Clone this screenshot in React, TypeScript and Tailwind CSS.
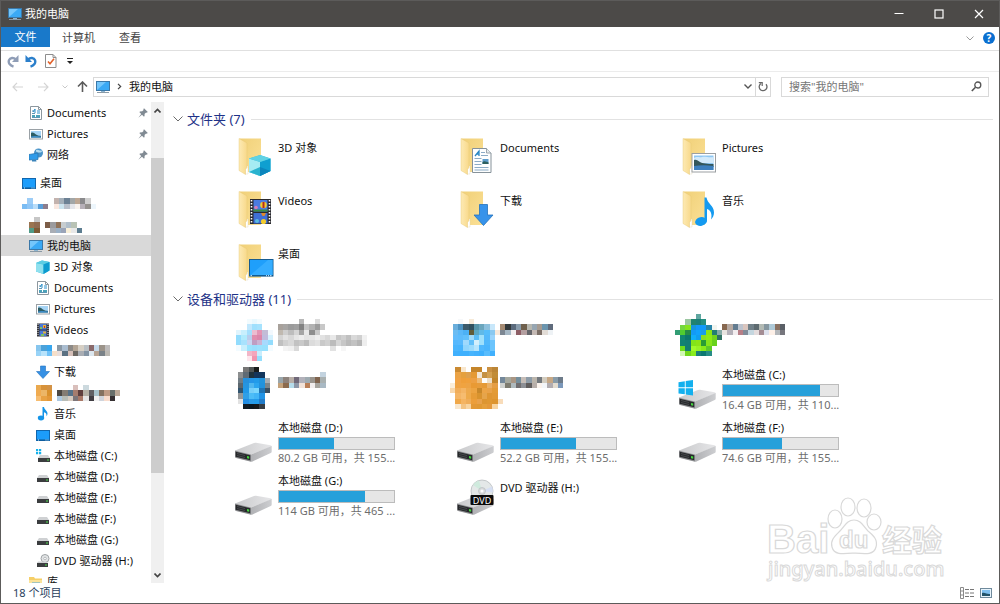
import React from "react";

/* ---------- Mosaic blocks ---------- */

const CELL = 5.25;

type MosaicProps = { rows: string[]; className?: string };

// Each row is a space separated list of hex colours, "-" leaves the cell empty
const Mosaic = ({ rows, className }: MosaicProps) => {
  const grid = rows.map((r) => r.trim().split(/\s+/));
  const cols = Math.max(...grid.map((r) => r.length));
  return (
    <svg
      aria-hidden="true"
      width={Math.round(cols * CELL)}
      height={Math.round(grid.length * CELL)}
      viewBox={`0 0 ${cols} ${grid.length}`}
      preserveAspectRatio="none"
      shapeRendering="crispEdges"
      className={className}
    >
      {grid.map((row, y) =>
        row.map((c, x) =>
          c === "-" ? null : <rect key={`${x}-${y}`} x={x} y={y} width="1" height="1" fill={`#${c}`} />
        )
      )}
    </svg>
  );
};

const pinkIcon = [
  "- - f2fbfe e8f8fe f2fbfe - -",
  "- - c2e8fd a0e0fd a6e2fd - -",
  "e0f4fd c8effd a4dffd ecbccf e394b4 c3bcd6 f2f8fd",
  "92dcfd b0ebfd b9cdec e08eae dc86aa c0bbdd d4f0fd",
  "92dcfd a8e2fd c9d4f0 bf9dc2 cbb3d3 a8dafd 92dcfd",
  "f2fbff c8effd 9ae4fd 9adefd 9ce1fd 98e1fd f2fbff",
  "- - f2b6c8 f5a5bb c8edfd - -",
  "- - fde6ed f195ae 95dffd - -",
];
const pinkLabel = [
  "- - - - b8b8b8 - - dcdcdc - - - - - - - - -",
  "a8a19b a7a5a3 9b9b9b a0a0a0 828282 c4c4c4 b2b2b2 9c9c9c c8c8c8 - - - - - - - -",
  "c0b9b0 cecece bdbdbd d5d5d5 a5a5a5 e8e8e8 8e8e8e c9c9c9 - - - - - - - - -",
  "d4d4d4 e2e2e2 d8d8d8 e6e6e6 ededed e4e4e4 e6e6e6 efefef e2e2e2 d8d8d8 e8e8e8 c6c6c6 cfcfcf c0c0c0 d9d9d9 d0d0d0 f1f1f1",
  "c0c0c0 d0d0d0 d8d8d8 c2c2c2 c9c9c9 bcbcbc dcdcdc e2e2e2 c9c9c9 d0d0d0 bcbcbc d6d6d6 c6c6c6 b9b9b9 c2c2c2 b5b5b5 eeeeee",
  "- f4f4f4 f0f0f0 d9d9d9 - - - - - - e2e2e2 - f6f6f6 - - - -",
];
const blueIcon = [
  "- f6f8fa - f6ead8 - - - - -",
  "6aaedb 4d93c2 3c5b6c 31515f 5694a8 6ba6bd 8dc0dc c8e7fa -",
  "6bbcf2 5ab8f8 4cb1f5 625c38 5ba7c2 60b9e7 56bdfb 8bc9f0 f8e8da",
  "62bcfc 5cbcfc 62c0fb a0daf9 5bbdf7 9fe0fb 55b9fb 9bd4fb -",
  "55b8fd 58b9fd 9fd9fd 61c0fa d3effc 9fe0fc 50b8fc 6cc4fc -",
  "4ab5fd 47b4fd 90d5fd 9adbfd b6e5fd 50b8fd 4ab5fd 6bc5fd -",
  "40b0fd 3eb0fd 3eb0fd 46b4fd 42b1fd 3eb0fd 59bdfd 40b0fd -",
];
const blueLabel = [
  "a58b73 32393b 5b6b7d 899cac 6f604d b7b7af 97a6b2 a69b91 6b95ae 5f6b7c",
  "7d8792 a6b8c5 f3eff0 8d5e65 b49fa0 65666b c4b9b4 7c6f67 e2dcd6 eef2f5",
];
const greenIcon = [
  "- - - - 5fa6a0 - - - -",
  "- - 9bc7a1 21836f 1c7f77 258f80 - - -",
  "- 74d640 84e51d 1795dc 1397fa 1199fa 2783a7 f1f4ef -",
  "329d74 50cd30 258c47 139af5 11a2fb 199de9 8ae613 237e71 85aaa6",
  "- 128671 0b776e 11aef8 119eee 8adf20 90ea13 71d41b 2f7263",
  "- 128273 137d74 82e41a 8de416 299d36 86e51a 68d11d -",
  "- 70dc1d 157c70 a1fa2a 97f225 88eb19 5ec929 - -",
  "- d1f7b3 70d61a 89ec1c 1b7e78 0c7771 278c86 - -",
];
const greenLabel = [
  "87684f b6a9a1 637c90 bcc3ce d9c5be 718189 5e6b70 b3bab4 8697a0 aec9d7 8a7161 5a5f66",
  "e8e4e0 b4b1b9 f2edef b77f87 818c9a c4d6df e4dcdd a48d94 dde1ed fdf0e8 b4b7bb 76767d",
];
const phoneIcon = [
  "- 767676 4f5455 181b1b - -",
  "8d8f90 606b74 1f323d 15345a 12365d -",
  "717d85 2690dc 2595e8 229be9 2294dd a4acb3",
  "5c676e 2695e0 50b7ef 2ca5ef 2092de 7b858b",
  "32556f 2198e7 77cff9 7cd7fd 1f74b5 3b5063",
  "939697 309fe6 4cbdf7 42b5f6 2294e6 -",
  "e2e2e2 228de3 2a9be8 229ceb 237dca -",
  "- 111b23 0c1720 17191b 373d43 -",
];
const phoneLabel = [
  "- - - - - - - - c3d3df",
  "9aa6ab 8d827b b8aea7 706878 b2b1ba 9eaab0 99948d 80644e a9b0b0 -",
  "c4a27b 8c6b4e b6dceb 8c96a7 f2e2d8 b97e56 f2eeee a7a59f a9b9c4 -",
];
const orangeIcon = [
  "- ca8a32 f9e7cd - c5852a c5852a - ca9042 bb8536 -",
  "- eba345 e5a03d dea04d e59a34 f2e6d4 c59142 d4a050 c18c37 -",
  "- f0a244 ef9f3a f0a03b eda044 edb974 fdfdfd ecdfca c1852b -",
  "fbeedb efa344 f0a340 eda345 e99a34 e79c3b e59a37 ebb065 e59e44 -",
  "f8d8ad f1ad59 f4b565 eea94c eda442 c8882b eca446 e9a249 e39b36 -",
  "- f4b565 f6bc70 eeaa4b e79c37 d9932e e5a44b df9632 e29935 -",
  "- f0a849 f5b461 efad59 ec9e3a e8a14b dd9531 df9732 dd942e f8dcba",
  "- f9e7cd f3c382 f8d4a0 e39936 e19933 e59f3c e4983a f8d4a0 -",
];
const orangeLabel = [
  "74889a a5a89e a99684 748e9c c6bdb7 8e9ca8 bbb5ac 74797e d3cdc0 c6a886 899ca9 6d7b89",
  "cfd1ce 7d7b6f aeb9bd 706e70 8c8f95 605d5d b8afaa fbf3ed f3f6f9 b2adb0 e3dccf 7b98ba",
];

const treeMosaicA = [
  "- 9dcdf7 - - - - c3b3ae a4afb9 6c8194 a2a6a7 bda794 8a8a8c cfcfcf -",
  "7abcf3 8ec6f7 b9ddf9 5a9fd9 8d7e8d - fae8e0 cbe4ef b9c0cb e4e5ea f8f2ee b6b0b8 95928f edf6fc",
];
const treeMosaicB = [
  "- c6c6c6 - - - - - - - -",
  "9a7450 8f6b51 - 7c5d47 9b9b9e 91745a c7cdd0 b1bfcb b9c3b5 -",
  "4f9a86 7c5a35 - - a8adb5 9ab0c6 9aa4b8 f8efd9 e8e8e8 5c7d90",
];
const treeMosaicC = [
  "87c6ee 4ba2da 37a6ee - 8b99a5 aabdd0 8d8a87 b3a595 d6cfc4 b9bfc4 8a6a6b c5d9ea 9b9389 bdbbbb",
  "98d3f7 b8e3fb 70c2f8 f6dfc9 e9dedb 5b7182 d6c0b9 6c6863 a9adb3 8494a4 dce7ef b7a495 7a8288 bcb9b3",
];
const treeMosaicD = [
  "eaa94f d7923a d39245 - - - - d9bfbb - ccd9de - - - - - -",
  "f0ab50 ecb667 d9912d - 4c4844 847c73 577288 a57c6e 5e3e3d b4b0a5 606064 a8c3cc 847160 bf9b85 686f6b bca998",
  "f7bd70 e8a244 e3983a - acc8e1 b8bdb7 d7cbc0 7c7579 a87867 e5e5e5 403d43 f1f1f1 cfd4dc f9dccd 363032 -",
];

/* ---------- Small 14px icons ---------- */

const Small = ({ children }: { children: React.ReactNode }) => (
  <svg aria-hidden="true" width="14" height="14" viewBox="0 0 14 14" className="shrink-0">
    {children}
  </svg>
);

const DocIcon = () => (
  <Small>
    <path d="M1.5 .5h8l3 3v10h-11z" fill="#fff" stroke="#8c979e" />
    <path d="M9.5 .5v3h3" fill="none" stroke="#8c979e" />
    <path d="M3 5h2.500M3 7.500h3M3 11.500h8" stroke="#5d97b5" />
    <path d="M4 6l2-3v4M8 5h3M8 7h3" stroke="#2c8fc9" fill="none" />
    <path d="M3 9h3v2H3zM7 9h4v2H7z" fill="#4aa3ba" />
  </Small>
);

const PicIcon = () => (
  <Small>
    <rect x=".5" y="2.500" width="13" height="9.500" fill="#fff" stroke="#9aa1a6" />
    <rect x="2" y="4" width="10" height="6.500" fill="#a6d4f5" />
    <path d="M2 6c2-1 3 0 5 1.500s4 1 5 1.500v1.500H2z" fill="#2d5d64" />
    <path d="M2 9.500c3-1 6-.5 10 0v1H2z" fill="#3d8fd0" />
  </Small>
);

const NetworkIcon = () => (
  <Small>
    <circle cx="9.500" cy="5" r="4.500" fill="#4a94c9" />
    <path d="M7 2c2-1 3 .5 5 .5s1 2-1 2-3 0-4-1z" fill="#b5dcf0" />
    <path d="M0 6.500l9-1.500v6.500L0 12z" fill="#2f9be9" stroke="#2672ad" strokeWidth=".7" />
    <path d="M3 12l4-.2.500 1.700H3z" fill="#3a83ba" />
  </Small>
);

const DesktopIcon = () => (
  <Small>
    <rect x=".5" y="2.500" width="13" height="10" fill="#1c9dfb" stroke="#1166ad" />
    <path d="M1 12h12" stroke="#0b548f" />
    <path d="M2 12h1M9.500 12h1M11.500 12h1" stroke="#cfe9ff" />
  </Small>
);

const PcIcon = () => (
  <Small>
    <rect x=".5" y="1.500" width="13" height="9" fill="#3aa9f5" stroke="#3b78a8" />
    <path d="M1 10L10 2H1z" fill="#74c6fb" />
    <path d="M5 11h4v1H5z" fill="#8eb6d2" />
    <path d="M1 12.500h12" stroke="#8a9aa6" />
  </Small>
);

const CubeIcon = () => (
  <Small>
    <path d="M0 3l6-2.500L13.500 2v8.500L7.500 14 0 11.500z" fill="#37b9dd" />
    <path d="M0 3l7.500 1.500V14L0 11.500z" fill="#8fe0ee" />
    <path d="M0 3l6-2.500L13.500 2l-6 2.500z" fill="#5ccde3" />
    <path d="M7.500 4.500l6-2.500v8.500L7.500 14z" fill="#0d9bcf" />
  </Small>
);

const VideoIcon = () => (
  <Small>
    <rect x="1" y=".5" width="12" height="13" fill="#34343a" />
    <path d="M2 1v12M12 1v12" stroke="#d8d8d8" strokeDasharray="1 1" />
    <rect x="3.500" y="1" width="7" height="5.500" fill="#4a78d8" />
    <rect x="3.500" y="7.500" width="7" height="5.500" fill="#4a78d8" />
    <path d="M4 4h2v2H4zM5 11h3v2H5z" fill="#7cc25d" />
    <path d="M7 2h3v3H7zM7 8.500h3v2H7z" fill="#e3b23a" />
    <path d="M8 3h1v2H8z" fill="#c9302c" />
  </Small>
);

const DownIcon = () => (
  <Small>
    <path d="M4.500 1h5v5.500h4L7 13.500.5 6.500h4z" fill="#3590e4" stroke="#2272bf" strokeWidth=".6" />
  </Small>
);

const NoteIcon = () => (
  <Small>
    <ellipse cx="5" cy="11" rx="3.200" ry="2.400" fill="#1494e8" />
    <path d="M6.500 11V0H8c.3 3 3.500 3.500 3.500 6.500 0 1-.3 2-1 2.800.3-2.400-.7-3.500-2.500-4V11z" fill="#1494e8" />
  </Small>
);

const DriveShape = () => (
  <>
    <path d="M1 8l2-3h8l2 3z" fill="#cfd1d3" />
    <rect x="1" y="8" width="12" height="4" fill="#3b3d3f" />
    <rect x="10" y="9.500" width="2" height="1" fill="#4fe04f" />
  </>
);

const DriveIcon = () => (
  <Small>
    <DriveShape />
  </Small>
);

const WinDriveIcon = () => (
  <Small>
    <path d="M0 0h2.200v2.200H0zM3 0h2.200v2.200H3zM0 3h2.200v2.200H0zM3 3h2.200v2.200H3z" fill="#15b1ea" />
    <g transform="translate(1 1)">
      <DriveShape />
    </g>
  </Small>
);

const DvdIcon = () => (
  <Small>
    <circle cx="9" cy="4.500" r="4" fill="#e3e5e6" stroke="#9fa3a6" />
    <circle cx="9" cy="4.500" r="1.300" fill="#fff" stroke="#9fa3a6" strokeWidth=".7" />
    <g transform="translate(0 1)">
      <path d="M1 8l1-1.500h7L12 8z" fill="#cfd1d3" />
      <rect x="1" y="8" width="11" height="4" fill="#3b3d3f" />
      <rect x="9" y="9.500" width="2" height="1" fill="#4fe04f" />
    </g>
  </Small>
);

const LibraryIcon = () => (
  <Small>
    <path d="M0 2h5l1 1.500h7V12H0z" fill="#f6cf67" />
    <path d="M0 5h13v8H0z" fill="#fbe39a" />
    <path d="M3 7.500h8V13H3z" fill="#4aa7e2" />
  </Small>
);

const PinIcon = () => (
  <svg aria-hidden="true" width="10" height="10" viewBox="0 0 10 10">
    <path
      d="M6 .2L9.800 4l-1.100.7-.6-.3L6.500 6c.3 1.200.1 2-.5 2.700L4 6.800.3 9.700 3.200 6 1.300 4c.8-.6 1.700-.8 2.600-.5l1.700-1.600-.3-.7z"
      fill="#808a93"
    />
  </svg>
);

/* ---------- Large icons ---------- */

const Large = ({ children }: { children: React.ReactNode }) => (
  <svg aria-hidden="true" width="48" height="52" viewBox="0 0 48 52" className="shrink-0">
    {children}
  </svg>
);

const Folder = () => (
  <>
    <defs>
      <linearGradient id="folderBack" x1="0" y1="0" x2="1" y2="1">
        <stop offset="0" stopColor="#f0d078" />
        <stop offset="1" stopColor="#fbe096" />
      </linearGradient>
      <linearGradient id="folderFront" x1="0" y1="0" x2="1" y2="0">
        <stop offset="0" stopColor="#fdeab4" />
        <stop offset="1" stopColor="#f8d98a" />
      </linearGradient>
    </defs>
    <path d="M9.500 7.500H31V41H15z" fill="url(#folderBack)" />
    <path d="M15 35h3v8h-3z" fill="#fff" stroke="#ddd3b5" strokeWidth=".4" />
    <path d="M9 7.500L17 12v24.500l-1.500 2v5L9 39.500z" fill="url(#folderFront)" stroke="#e6c570" strokeWidth=".4" />
  </>
);

const CubeLarge = () => (
  <Large>
    <Folder />
    <path d="M19 27.500L30 24l10.500 3.500V40L30 45 19 41z" fill="#31bcdc" />
    <path d="M19 27.500L30 31v14l-11-4z" fill="#a5ecf3" />
    <path d="M19 41l11-5v9z" fill="#2ab3cf" />
    <path d="M30 31l10.500-3.500V40L30 45z" fill="#0f9fd0" />
    <path d="M30 45V36l10.500 4z" fill="#0c86bd" />
    <path d="M19 27.500L30 24l10.500 3.500L30 31z" fill="#60d2e4" />
  </Large>
);

const DocLarge = () => (
  <Large>
    <Folder />
    <path d="M20.500 17.500h14l4.500 4.500v19.500H20.500z" fill="#fdfefe" stroke="#86929a" />
    <path d="M34.500 17.500V22H39" fill="#e6ecef" stroke="#86929a" strokeWidth=".8" />
    <path d="M23 25l4-5v5M24.500 23.200H27" stroke="#2786c4" strokeWidth="1.300" fill="none" />
    <path d="M29 21.500h4M29 24.500h7M22.500 27.500h7M22.500 30.500h7M22.500 33.500h7M22.500 36.500h14M22.500 39h14" stroke="#7ea2c0" strokeWidth=".9" />
    <path d="M30.500 28h6v5h-6z" fill="#5d9ccc" />
    <path d="M30.500 31c2-1.500 4 0 6 .5V33h-6z" fill="#2c5f5d" />
  </Large>
);

const PicLarge = () => (
  <Large>
    <Folder />
    <rect x="18" y="22.500" width="23.500" height="18.500" fill="#fff" stroke="#9b9fa2" />
    <rect x="20" y="24.500" width="19.500" height="14.500" fill="#8fc7f2" />
    <path d="M20 27c3-2 5 0 8-1s7 1 11.500 0v6H20z" fill="#d3eafa" />
    <path d="M20 29c2-1 4 .5 6 2s8 2 13.500 2v3H20z" fill="#34575a" />
    <path d="M20 35c6-1 13.500-1 19.500 0v4H20z" fill="#3d7fbd" />
  </Large>
);

const VideoLarge = () => (
  <Large>
    <Folder />
    <rect x="20" y="15" width="21" height="25" fill="#29292e" />
    <path d="M21.500 16v24M39.500 16v24" stroke="#fff" strokeWidth="1.600" strokeDasharray="1.500 1.500" />
    <rect x="23.500" y="16" width="14" height="11.500" fill="#4a7be0" />
    <rect x="23.500" y="29" width="14" height="10.500" fill="#3f6fd6" />
    <circle cx="33.500" cy="21" r="3.300" fill="#f2cb2e" />
    <path d="M32.500 18h2v6h-2z" fill="#b52b20" />
    <circle cx="26" cy="23.500" r="1.800" fill="#d67cb8" />
    <path d="M23.500 25.500h14v2h-14z" fill="#3b8c43" />
    <path d="M31 29h5l-1.500 3h-2z" fill="#e08b2c" />
    <circle cx="33.500" cy="37.500" r="2.600" fill="#f2cb2e" />
    <circle cx="27" cy="37" r="2" fill="#5bbbe0" />
  </Large>
);

const DownLarge = () => (
  <Large>
    <Folder />
    <path d="M27.500 20.500h8v10.500h5.500l-9.500 10.500-9.500-10.500h5.500z" fill="#3793ea" stroke="#2572bd" strokeWidth=".8" />
  </Large>
);

const NoteLarge = () => (
  <Large>
    <Folder />
    <ellipse cx="27" cy="37.500" rx="6" ry="4.300" transform="rotate(-12 27 37.500)" fill="#149af0" />
    <path d="M30.500 37.500V13.500h2c.8 6 7.500 8 7.500 15 0 3-1.200 5-3 7 1.500-5.500-.5-9.500-4-10.500v12.500z" fill="#149af0" />
  </Large>
);

const DesktopLarge = () => (
  <Large>
    <Folder />
    <rect x="19.500" y="22.500" width="23.500" height="16.500" fill="#1f9ffb" stroke="#175c90" />
    <path d="M20 38.500L38 23h4.500v15.500z" fill="#35adff" />
    <path d="M20 38.700h23" stroke="#0e4f80" />
    <path d="M20.500 38.700h1.500M36 38.700h1M38 38.700h1M40 38.700h1.500" stroke="#d9efff" />
  </Large>
);

const DriveBody = () => (
  <>
    <defs>
      <linearGradient id="driveTop" x1="0" y1="0" x2="1" y2="0">
        <stop offset="0" stopColor="#c9cacc" />
        <stop offset="1" stopColor="#e6e6e8" />
      </linearGradient>
      <linearGradient id="driveSide" x1="0" y1="0" x2="1" y2="0">
        <stop offset="0" stopColor="#b0b1b4" />
        <stop offset="1" stopColor="#cdced1" />
      </linearGradient>
    </defs>
    <path d="M5 31.500L24 24q1-.4 2-.3l14.500 2.500q1.200.3 1.200 1.300L21 35.500z" fill="url(#driveTop)" />
    <path d="M21 35.500L41.700 27v5.500q0 1-1 1.500L22.500 42.500q-.8.400-1.500.2z" fill="url(#driveSide)" />
    <path d="M5 31.500l16 4v7.200L6 39q-1-.3-1-1z" fill="#8b8c8f" />
    <path d="M5.700 32.700l14.500 3.500v5L5.700 37.700z" fill="#26282a" />
    <path d="M7 34.500l8 2M7 36.500l8 2" stroke="#55585b" strokeWidth=".7" />
    <path d="M17 37l2.200.5v2.200L17 39.200z" fill="#44d63f" />
  </>
);

const DriveLarge = () => (
  <Large>
    <DriveBody />
  </Large>
);

const WinDriveLarge = () => (
  <Large>
    <DriveBody />
    <path d="M4.500 16.200l6.300-1v6.100H4.500zM11.700 15l7.300-1.100v7.400h-7.300zM4.500 22.200h6.300v6.100l-6.300-.9zM11.700 22.200H19v7.200l-7.300-1z" fill="#13b0ee" />
  </Large>
);

const DvdLarge = () => (
  <Large>
    <DriveBody />
    <circle cx="30" cy="19" r="11" fill="#e4e8e8" stroke="#b9bdbf" strokeWidth=".8" />
    <path d="M30 19L21 13a11 11 0 0 1 6-4.500z" fill="#cfeadd" />
    <path d="M30 19l10-4.500a11 11 0 0 1 .8 6z" fill="#d6dff2" />
    <circle cx="30" cy="19" r="3.500" fill="#d7dadb" stroke="#b1b5b8" strokeWidth=".6" />
    <circle cx="30" cy="19" r="1.500" fill="#fff" />
    <rect x="18.500" y="23" width="23" height="10" rx="1" fill="#0b0b0b" />
    <text x="30" y="31.500" fontSize="9" textAnchor="middle" fill="#fff" fontFamily="Noto Sans, sans-serif">
      DVD
    </text>
  </Large>
);

/* ---------- Navigation tree ---------- */

type TreeItem = {
  label?: string;
  icon?: React.ReactNode;
  mosaic?: string[];
  level: 0 | 1 | 2;
  pinned?: boolean;
  active?: boolean;
  spaced?: boolean;
};

const tree: TreeItem[] = [
  { label: "Documents", icon: <DocIcon />, level: 1, pinned: true },
  { label: "Pictures", icon: <PicIcon />, level: 1, pinned: true },
  { label: "网络", icon: <NetworkIcon />, level: 1, pinned: true },
  { label: "桌面", icon: <DesktopIcon />, level: 0, spaced: true },
  { mosaic: treeMosaicA, level: 0 },
  { mosaic: treeMosaicB, level: 1 },
  { label: "我的电脑", icon: <PcIcon />, level: 1, active: true },
  { label: "3D 对象", icon: <CubeIcon />, level: 2 },
  { label: "Documents", icon: <DocIcon />, level: 2 },
  { label: "Pictures", icon: <PicIcon />, level: 2 },
  { label: "Videos", icon: <VideoIcon />, level: 2 },
  { mosaic: treeMosaicC, level: 2 },
  { label: "下载", icon: <DownIcon />, level: 2 },
  { mosaic: treeMosaicD, level: 2 },
  { label: "音乐", icon: <NoteIcon />, level: 2 },
  { label: "桌面", icon: <DesktopIcon />, level: 2 },
  { label: "本地磁盘 (C:)", icon: <WinDriveIcon />, level: 2 },
  { label: "本地磁盘 (D:)", icon: <DriveIcon />, level: 2 },
  { label: "本地磁盘 (E:)", icon: <DriveIcon />, level: 2 },
  { label: "本地磁盘 (F:)", icon: <DriveIcon />, level: 2 },
  { label: "本地磁盘 (G:)", icon: <DriveIcon />, level: 2 },
  { label: "DVD 驱动器 (H:)", icon: <DvdIcon />, level: 2 },
  { label: "库", icon: <LibraryIcon />, level: 1 },
];

const indent = { 0: "pl-[21px]", 1: "pl-[28px]", 2: "pl-[35px]" };

const Sidebar = () => (
  <aside className="flex shrink-0 overflow-hidden pt-px">
    <nav className="w-[150px] overflow-hidden">
      {tree.map((item, i) => (
        <a
          key={i}
          href="#"
          className={`flex h-[21px] items-center gap-1 whitespace-nowrap ${indent[item.level]} ${
            item.active ? "bg-[#d9d9d9]" : ""
          } ${item.spaced ? "mt-[7px]" : ""}`}
        >
          {item.icon}
          {item.label && <span>{item.label}</span>}
          {item.mosaic && <Mosaic rows={item.mosaic} className="shrink-0" />}
          {item.pinned && (
            <span className="ml-auto pr-[3px]">
              <PinIcon />
            </span>
          )}
        </a>
      ))}
    </nav>
    <div className="flex w-[13px] flex-col bg-[#f0f0f0]">
      <button aria-label="Scroll up" className="flex h-4 items-center justify-center">
        <svg width="7" height="5" viewBox="0 0 7 5">
          <path d="M.5 4.500l3-3 3 3" fill="none" stroke="#444" strokeWidth="1.600" />
        </svg>
      </button>
      <div className="flex flex-1 flex-col">
        <div className="grow-[9]" />
        <div className="grow-[70] bg-[#cdcdcd]" />
        <div className="grow-[21]" />
      </div>
      <button aria-label="Scroll down" className="flex h-4 items-center justify-center">
        <svg width="7" height="5" viewBox="0 0 7 5">
          <path d="M.5 .5l3 3 3-3" fill="none" stroke="#444" strokeWidth="1.600" />
        </svg>
      </button>
    </div>
  </aside>
);

/* ---------- Content ---------- */

const folders = [
  { label: "3D 对象", icon: <CubeLarge /> },
  { label: "Documents", icon: <DocLarge /> },
  { label: "Pictures", icon: <PicLarge /> },
  { label: "Videos", icon: <VideoLarge /> },
  { label: "下载", icon: <DownLarge /> },
  { label: "音乐", icon: <NoteLarge /> },
  { label: "桌面", icon: <DesktopLarge /> },
];

const devices = [
  { icon: pinkIcon, label: pinkLabel, iconPad: "pt-[6px]", labelPad: "pt-[6px]" },
  { icon: blueIcon, label: blueLabel, iconPad: "pt-[6px]", labelPad: "pt-[11px]" },
  { icon: greenIcon, label: greenLabel, iconPad: "pt-[1px]", labelPad: "pt-[11px]" },
  { icon: phoneIcon, label: phoneLabel, iconPad: "pt-[1px]", labelPad: "pt-[6px]" },
  { icon: orangeIcon, label: orangeLabel, iconPad: "pt-[1px]", labelPad: "pt-[11px]" },
];

const drives = [
  { label: "本地磁盘 (C:)", used: 84.5, info: "16.4 GB 可用，共 110...", system: true },
  { label: "本地磁盘 (D:)", used: 47.5, info: "80.2 GB 可用，共 155..." },
  { label: "本地磁盘 (E:)", used: 65.5, info: "52.2 GB 可用，共 155..." },
  { label: "本地磁盘 (F:)", used: 51.5, info: "74.6 GB 可用，共 155..." },
  { label: "本地磁盘 (G:)", used: 75, info: "114 GB 可用，共 465 ..." },
];

const GroupHeader = ({ title }: { title: string }) => (
  <div className="flex h-[18px] items-center gap-[6px] pr-[6px] pl-[9px]">
    <button className="flex items-center gap-1 text-[13px] leading-[18px] whitespace-nowrap text-[#1e3287]">
      <svg aria-hidden="true" width="10" height="6" viewBox="0 0 10 6">
        <path d="M.5 .5L5 5 9.500 .5" fill="none" stroke="#6b6b6b" />
      </svg>
      {title}
    </button>
    <div className="h-px flex-1 bg-[#e2e2e2]" />
  </div>
);

const Content = () => (
  <main className="min-w-0 flex-1 overflow-hidden pt-[9px]">
    <GroupHeader title="文件夹 (7)" />
    <div className="mt-[3px] grid grid-cols-[repeat(auto-fill,222px)] pl-[66px]">
      {folders.map((f) => (
        <a key={f.label} href="#" className="flex h-[53px]">
          {f.icon}
          <span className="pt-[9px] leading-4">{f.label}</span>
        </a>
      ))}
    </div>

    <GroupHeader title="设备和驱动器 (11)" />
    <div className="mt-[5px] grid grid-cols-[repeat(auto-fill,222px)] pl-[66px]">
      {devices.map((d, i) => (
        <a key={i} href="#" className="flex h-[53px]">
          <span className={`flex w-12 shrink-0 items-start justify-center ${d.iconPad}`}>
            <Mosaic rows={d.icon} className="shrink-0" />
          </span>
          <span className={d.labelPad}>
            <Mosaic rows={d.label} />
          </span>
        </a>
      ))}
      {drives.map((d) => (
        <a key={d.label} href="#" className="flex h-[53px]">
          {d.system ? <WinDriveLarge /> : <DriveLarge />}
          <span className="w-[117px] pt-px leading-4 whitespace-nowrap">
            <span className="block">{d.label}</span>
            <span
              role="progressbar"
              aria-label={d.label}
              aria-valuenow={d.used}
              className="mt-px block h-[13px] border border-[#bcbcbc] bg-[#e6e6e6]"
            >
              <span className="block h-full bg-[#26a0da]" style={{ width: `${d.used}%` }} />
            </span>
            <span className="block text-[#6d6d6d]">{d.info}</span>
          </span>
        </a>
      ))}
      <a href="#" className="flex h-[53px]">
        <DvdLarge />
        <span className="pt-2 leading-4">DVD 驱动器 (H:)</span>
      </a>
    </div>
  </main>
);

const Watermark = () => (
  <svg
    aria-hidden="true"
    width="184"
    height="90"
    viewBox="0 0 184 90"
    className="pointer-events-none absolute right-[50px] bottom-[20px]"
    fill="#fff"
    stroke="#d9d9d9"
    strokeWidth="1.200"
  >
    <text x="2" y="60" fontSize="40" fontWeight="700" fontFamily="Liberation Sans, sans-serif">
      Bai
    </text>
    <ellipse cx="70" cy="26" rx="7" ry="9" />
    <ellipse cx="83" cy="14" rx="7" ry="9" />
    <ellipse cx="99" cy="15" rx="7" ry="9" />
    <ellipse cx="109" cy="29" rx="7" ry="8" />
    <path d="M89 27c7 0 9 6 14 11 6 5 10 9 8 16-2 8-10 7-22 6-12 1-20 2-22-6-2-7 3-11 8-16 5-5 7-11 14-11z" />
    <text x="74" y="55" fontSize="24" fontWeight="700" fontFamily="Liberation Sans, sans-serif">
      du
    </text>
    <text x="117" y="58" fontSize="30" fontWeight="700" fontFamily="Noto Sans CJK SC, sans-serif">
      经验
    </text>
    <text x="3" y="83" fontSize="20" fontWeight="500" fontFamily="Noto Sans, sans-serif" strokeWidth="1">
      jingyan.baidu.com
    </text>
  </svg>
);

/* ---------- Window chrome ---------- */

const TitleBar = () => (
  <header className="flex h-[26px] items-center bg-[#4c4a48] pl-[7px] text-white">
    <PcIcon />
    <h1 className="pl-[3px]">我的电脑</h1>
    <div className="ml-auto flex h-full">
      <button aria-label="最小化" className="flex w-10 items-center justify-center">
        <svg width="10" height="10" viewBox="0 0 10 10">
          <path d="M.5 4.500h9" stroke="#fff" />
        </svg>
      </button>
      <button aria-label="最大化" className="flex w-10 items-center justify-center">
        <svg width="10" height="10" viewBox="0 0 10 10">
          <rect x="1" y="1" width="8" height="8" fill="none" stroke="#fff" strokeWidth="1.200" />
        </svg>
      </button>
      <button aria-label="关闭" className="flex w-10 items-center justify-center">
        <svg width="10" height="10" viewBox="0 0 10 10">
          <path d="M1 1l8 8M9 1L1 9" stroke="#fff" strokeWidth="1.200" />
        </svg>
      </button>
    </div>
  </header>
);

const MenuBar = () => (
  <div className="flex h-6 items-start border-b border-[#e0e0e0]">
    <button className="h-5 w-[49px] bg-[#1979ca] text-white">文件</button>
    <button className="ml-3 h-[22px] text-[#444]">计算机</button>
    <button className="ml-6 h-[22px] text-[#444]">查看</button>
    <div className="ml-auto flex h-[22px] items-center gap-[9px] pr-1">
      <button aria-label="展开功能区">
        <svg width="8" height="5" viewBox="0 0 8 5">
          <path d="M.5 .5L4 4 7.500 .5" fill="none" stroke="#9a9a9a" />
        </svg>
      </button>
      <button
        aria-label="帮助"
        className="flex h-3 w-3 items-center justify-center rounded-full bg-[#0a6fd0] text-[10px] leading-3 font-bold text-white"
      >
        ?
      </button>
    </div>
  </div>
);

const QuickBar = () => (
  <div className="flex h-[21px] items-center border-b border-[#ececec] pl-[6px]">
    <button aria-label="重做">
      <svg width="12" height="14" viewBox="0 0 12 14">
        <path d="M6.500 12.700C3 11.500 1 9 2 6.200 3 3.500 6.500 3.200 9 5.500" fill="none" stroke="#8f9db6" strokeWidth="2.400" />
        <path d="M11.500 1v7H5z" fill="#8f9db6" />
      </svg>
    </button>
    <button aria-label="撤销" className="ml-[6px]">
      <svg width="12" height="14" viewBox="0 0 12 14">
        <path d="M5.500 12.700C9 11.500 11 9 10 6.200 9 3.500 5.500 3.200 3 5.500" fill="none" stroke="#2b7fcb" strokeWidth="2.400" />
        <path d="M.5 1v7H7z" fill="#2b7fcb" />
      </svg>
    </button>
    <button aria-label="属性" className="ml-[8px]">
      <svg width="12" height="14" viewBox="0 0 12 14">
        <path d="M.5 .5H8l3 3v10H.5z" fill="#fff" stroke="#8d8d8d" />
        <path d="M8 .5v3h3" fill="none" stroke="#8d8d8d" />
        <path d="M3 7.500l2 2.200 4-5" fill="none" stroke="#e2622b" strokeWidth="1.600" />
      </svg>
    </button>
    <button aria-label="自定义快速访问工具栏" className="ml-[9px]">
      <svg width="8" height="7" viewBox="0 0 8 7">
        <path d="M1 .5h6" stroke="#222" />
        <path d="M1 3h6L4 6z" fill="#222" />
      </svg>
    </button>
  </div>
);

const AddressBar = () => (
  <div className="flex h-[29px] items-center pr-[10px] pl-[11px]">
    <button aria-label="后退">
      <svg width="11" height="10" viewBox="0 0 11 10">
        <path d="M5 .8L1 5l4 4.200M1 5h10" fill="none" stroke="#d4d4d4" strokeWidth="1.200" />
      </svg>
    </button>
    <button aria-label="前进" className="ml-[15px]">
      <svg width="11" height="10" viewBox="0 0 11 10">
        <path d="M6 .8L10 5 6 9.200M10 5H0" fill="none" stroke="#d4d4d4" strokeWidth="1.200" />
      </svg>
    </button>
    <button aria-label="最近浏览的位置" className="ml-[13px]">
      <svg width="6" height="4" viewBox="0 0 6 4">
        <path d="M.5 .5L3 3 5.500 .5" fill="none" stroke="#c9c9c9" />
      </svg>
    </button>
    <button aria-label="向上" className="ml-[9px]">
      <svg width="11" height="11" viewBox="0 0 11 11">
        <path d="M1 5.500L5.500 1 10 5.500M5.500 1v10" fill="none" stroke="#5b5b5b" strokeWidth="1.600" />
      </svg>
    </button>
    <div className="ml-[5px] flex h-5 flex-1 items-center border border-[#d9d9d9] pl-[2px]">
      <PcIcon />
      <svg aria-hidden="true" width="5" height="7" viewBox="0 0 5 7" className="mx-[7px]">
        <path d="M1 .8l2.700 2.700L1 6.200" fill="none" stroke="#444" strokeWidth="1.200" />
      </svg>
      <button className="text-[#111]">我的电脑</button>
      <button aria-label="历史记录" className="ml-auto px-[3px]">
        <svg width="8" height="5" viewBox="0 0 8 5">
          <path d="M.5 .5L4 4 7.500 .5" fill="none" stroke="#555" strokeWidth="1.400" />
        </svg>
      </button>
      <button aria-label="刷新" className="flex h-full w-[15px] items-center justify-center border-l border-[#d9d9d9]">
        <svg width="10" height="11" viewBox="0 0 10 11">
          <path d="M8 3.200A3.900 3.900 0 1 1 3 2.500" fill="none" stroke="#666" strokeWidth="1.300" />
          <path d="M.8 1.700h3.400v3.300" fill="none" stroke="#666" strokeWidth="1.200" />
        </svg>
      </button>
    </div>
    <label className="ml-[10px] flex h-5 w-[208px] items-center border border-[#d9d9d9] pr-[6px] pl-[7px]">
      <input
        type="search"
        aria-label="搜索"
        placeholder={'搜索"我的电脑"'}
        className="w-full min-w-0 flex-1 bg-transparent outline-none placeholder:text-[#767676]"
      />
      <svg aria-hidden="true" width="11" height="11" viewBox="0 0 11 11">
        <circle cx="6.800" cy="4" r="3" fill="none" stroke="#555" strokeWidth="1.300" />
        <path d="M4.500 6.200L.8 10" stroke="#555" strokeWidth="1.600" />
      </svg>
    </label>
  </div>
);

const StatusBar = () => (
  <footer className="flex h-5 items-center pr-[7px] pl-3 text-[#28405c]">
    <span>18 个项目</span>
    <div className="ml-auto flex gap-[6px]">
      <button aria-label="详细信息">
        <svg width="14" height="12" viewBox="0 0 14 12">
          <path d="M.5 .5h3v11h-3zM.5 4h3M.5 8h3" fill="none" stroke="#8a8a8a" />
          <path d="M5 2.500h4M10 2.500h4M5 6h4M10 6h4M5 9.500h4M10 9.500h4" stroke="#777" />
        </svg>
      </button>
      <button aria-label="大图标">
        <svg width="12" height="12" viewBox="0 0 12 12">
          <rect x=".5" y="1.500" width="11" height="9" fill="#e8f4fc" stroke="#6f8a9c" />
          <rect x="2" y="3" width="8" height="6" fill="#7fc0f0" />
          <path d="M2 6c3-1 5 1.500 8 1v2H2z" fill="#23546b" />
        </svg>
      </button>
    </div>
  </footer>
);

export default function App() {
  return (
    <div className="relative flex h-screen flex-col overflow-hidden border border-[#5c5b5a] bg-white font-['Noto_Sans','Noto_Sans_CJK_SC',sans-serif] text-[11px] leading-4 text-[#111]">
      <TitleBar />
      <MenuBar />
      <QuickBar />
      <AddressBar />
      <div className="flex min-h-0 flex-1">
        <Sidebar />
        <Content />
      </div>
      <StatusBar />
      <Watermark />
    </div>
  );
}
